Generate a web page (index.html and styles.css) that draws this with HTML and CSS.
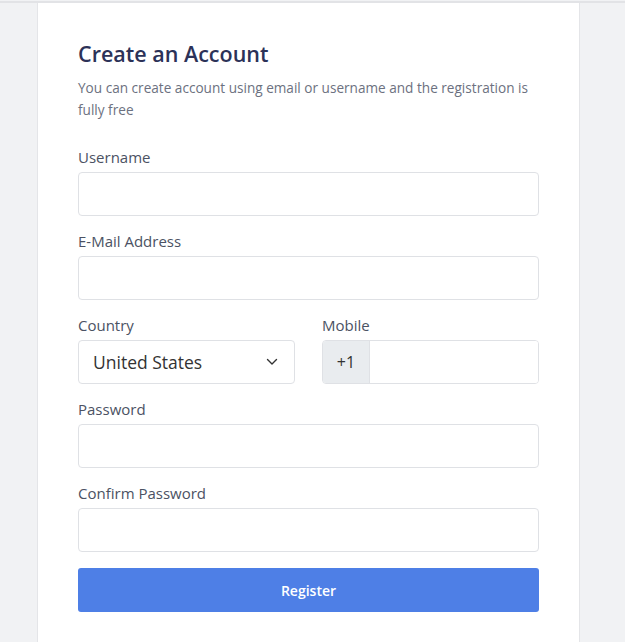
FILE: index.html
```html
<!DOCTYPE html>
<html lang="en">
<head>
  <meta charset="UTF-8">
  <title>Create an Account</title>
  <link rel="stylesheet" href="styles.css">
</head>
<body>
  <div class="page">
    <div class="card">
      <h1>Create an Account</h1>
      <p class="lead">You can create account using email or username and the registration is fully free</p>

      <form id="formRegister">
        <div class="field">
          <label for="username">Username</label>
          <input type="text" id="username" class="input">
        </div>

        <div class="field">
          <label for="email">E-Mail Address</label>
          <input type="email" id="email" class="input">
        </div>

        <div class="row">
          <div class="field">
            <label for="country">Country</label>
            <div class="select">
              <span>United States</span>
              <svg width="12" height="8" viewBox="0 0 12 8"><path d="M1.5 1.5 6 6l4.5-4.5" fill="none" stroke="#333" stroke-width="1.4" stroke-linecap="round" stroke-linejoin="round"/></svg>
            </div>
          </div>
          <div class="field">
            <label for="mobile">Mobile</label>
            <div class="input-group">
              <span class="prefix">+1</span>
              <input type="text" id="mobile">
            </div>
          </div>
        </div>

        <div class="field">
          <label for="password">Password</label>
          <input type="password" id="password" class="input">
        </div>

        <div class="field">
          <label for="confirm">Confirm Password</label>
          <input type="password" id="confirm" class="input">
        </div>

        <button type="submit">Register</button>
      </form>
    </div>
  </div>
</body>
</html>
```

FILE: styles.css
```css
body {
  margin: 0;
  background-color: #f1f2f4;
  font-family: 'Open Sans', 'Noto Sans', sans-serif;
  color: #4b5263;
}

.page {
  border-top: 2px solid #e2e3e6;
  margin-top: 1px;
}

.card {
  background-color: #ffffff;
  width: 461px;
  margin-left: 37px;
  padding: 36px 40px 40px;
  border-left: 1px solid #e4e5e8;
  border-right: 1px solid #e4e5e8;
}

h1 {
  margin: 0 0 8px;
  font-size: 21.5px;
  font-weight: 600;
  color: #2c3258;
  line-height: 30px;
}

.lead {
  margin: 0 0 26px;
  font-size: 13.6px;
  line-height: 22px;
  color: #6c7180;
}

.field {
  margin-bottom: 15px;
}

label {
  display: block;
  font-size: 15px;
  line-height: 20px;
  margin-bottom: 5px;
  color: #4b5263;
}

.input,
.select,
.input-group {
  box-sizing: border-box;
  width: 100%;
  height: 44px;
  border: 1px solid #dfe1e5;
  border-radius: 4px;
  background: #fff;
}

.input {
  display: block;
  padding: 0 14px;
  font: inherit;
}

.row {
  display: grid;
  grid-template-columns: minmax(0, 1fr) minmax(0, 1fr);
  gap: 27px;
}

.select {
  display: flex;
  align-items: center;
  justify-content: space-between;
  padding: 0 16px 0 14px;
  font-size: 17.5px;
  color: #333;
}

.input-group {
  display: flex;
  overflow: hidden;
}

.prefix {
  width: 46px;
  display: flex;
  align-items: center;
  justify-content: center;
  background-color: #e9ecef;
  border-right: 1px solid #dfe1e5;
  font-size: 16px;
  color: #333;
}

.input-group input {
  flex: 1;
  border: none;
  min-width: 0;
}

button {
  display: block;
  width: 100%;
  height: 44px;
  margin-top: 16px;
  background-color: #4e7fe6;
  color: #ffffff;
  border: none;
  border-radius: 3px;
  font-family: inherit;
  font-size: 14px;
  font-weight: 600;
  cursor: pointer;
}
```
